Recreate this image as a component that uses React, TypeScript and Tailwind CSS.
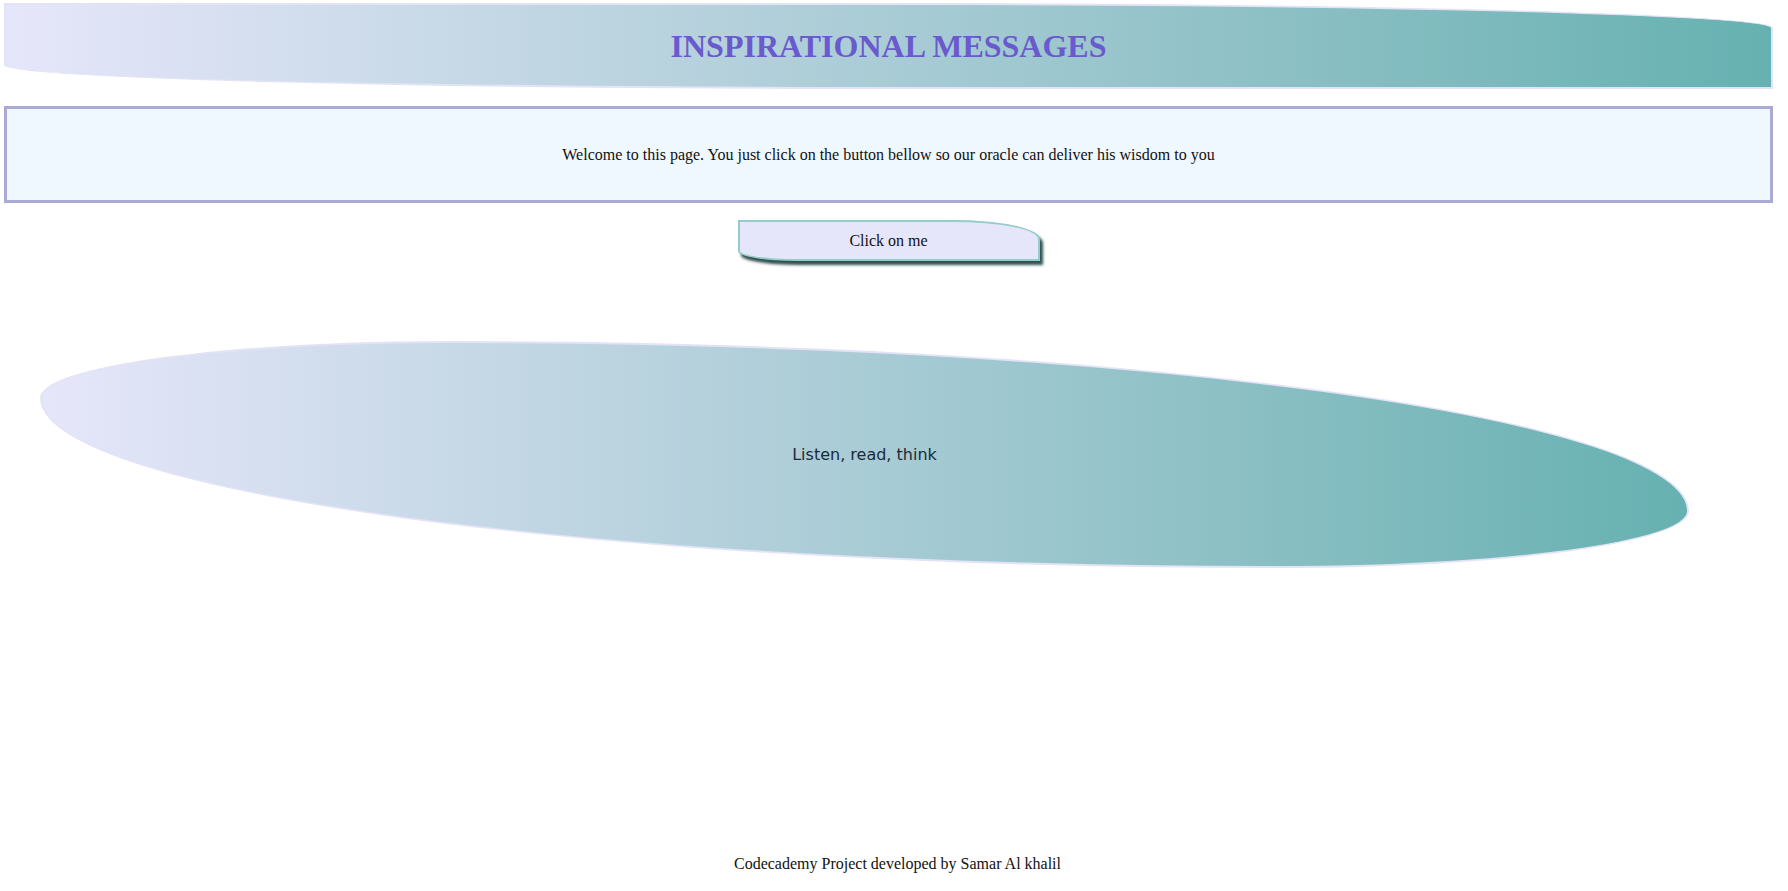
// Inspirational messages page
const serif = "font-['Liberation_Serif','Times_New_Roman',serif]";

export default function App() {
  return (
    <main className={`min-h-screen bg-white text-[#111] ${serif}`}>
      <div className="pl-[4px] pr-[15px] pt-[3px]">
        {/* HEADER */}
        <header className="flex h-[86px] items-center justify-center border-2 border-[#e3e3f7] bg-gradient-to-r from-[#e6e6fa] to-[#66b1b1] rounded-[0_50%_0_50%/0_25px_0_24px]">
          <h1 className="text-[32px] font-bold leading-none text-[#6a5acd]">INSPIRATIONAL MESSAGES</h1>
        </header>

        {/* INTRO */}
        <section className="mt-[17px] flex h-[97px] items-center justify-center border-[3px] border-[#aaaad5] bg-[#f0f8ff]">
          <p className="text-[16px]">
            Welcome to this page. You just click on the button bellow so our oracle can deliver his wisdom to you
          </p>
        </section>

        {/* BUTTON */}
        <div className="mt-[17px] flex justify-center">
          <button
            type="button"
            className={`h-[41px] w-[302px] border-2 border-[#93ccc8] bg-[#e6e6fa] text-[16px] text-[#111] shadow-[3px_4px_3px_#2f4f4f] rounded-[0_87px_0_59px/0_19px_0_10px] ${serif}`}
          >
            Click on me
          </button>
        </div>

        {/* MESSAGE */}
        <div className="ml-[36px] mt-[80px] flex h-[227px] w-[1649px] items-center justify-center border-2 border-[#e3e3f7] bg-gradient-to-r from-[#e6e6fa] to-[#66b1b1] rounded-[25%_75%_25%_75%]">
          <p className="font-['DejaVu_Sans',Verdana,sans-serif] text-[16px] text-[#1c2a3a]">Listen, read, think</p>
        </div>

        {/* FOOTER */}
        <footer className="mt-[287px] pl-[18px] text-center text-[16px] leading-[18px]">
          Codecademy Project developed by Samar Al khalil
        </footer>
      </div>
    </main>
  );
}
